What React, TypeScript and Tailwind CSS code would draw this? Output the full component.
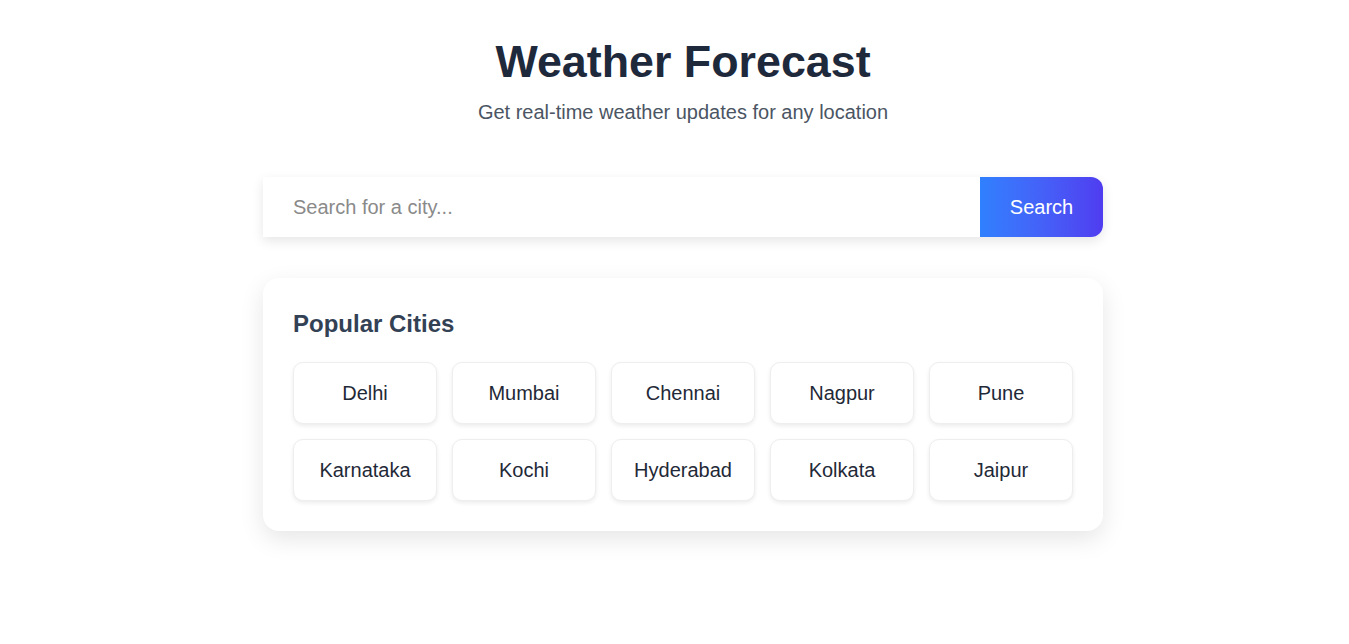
import React from "react";

const cities = ["Delhi", "Mumbai", "Chennai", "Nagpur", "Pune", "Karnataka", "Kochi", "Hyderabad", "Kolkata", "Jaipur"];

export default function App() {
  return (
    <div className="min-h-screen bg-white pl-[17px]" style={{ fontFamily: '"Liberation Sans", Arial, sans-serif' }}>
      <div className="mx-auto w-[840px] pt-[39px]">
        <h1 className="text-center text-[44.8px] font-bold leading-[44.8px] text-[#1e293b]">Weather Forecast</h1>
        <p className="mt-[16px] text-center text-[20px] leading-[24px] text-[#4b5563]">Get real-time weather updates for any location</p>
        <div className="mt-[53px] flex h-[60px] rounded-r-[12px] bg-white shadow-[0_4px_12px_rgba(0,0,0,0.1)]">
          <input
            className="flex-1 bg-transparent pl-[30px] text-[20px] text-[#1f2937] outline-none placeholder:text-[#8a8a8a]"
            placeholder="Search for a city..."
          />
          <button className="w-[123px] rounded-r-[12px] bg-gradient-to-r from-[#2f80ff] to-[#4f3cf0] text-[20px] text-white">Search</button>
        </div>
        <div className="mt-[41px] rounded-[16px] bg-white p-[30px] shadow-[0_8px_24px_rgba(0,0,0,0.1)]">
          <h2 className="text-[24px] font-bold leading-[32px] text-[#334155]">Popular Cities</h2>
          <div className="mt-[22px] grid grid-cols-5 gap-[15px]">
            {cities.map((c) => (
              <button
                key={c}
                className="h-[62px] rounded-[10px] border border-[#eeeeee] bg-white text-[20px] text-[#1f2937] shadow-[0_2px_4px_rgba(0,0,0,0.08)]"
              >
                {c}
              </button>
            ))}
          </div>
        </div>
      </div>
    </div>
  );
}
